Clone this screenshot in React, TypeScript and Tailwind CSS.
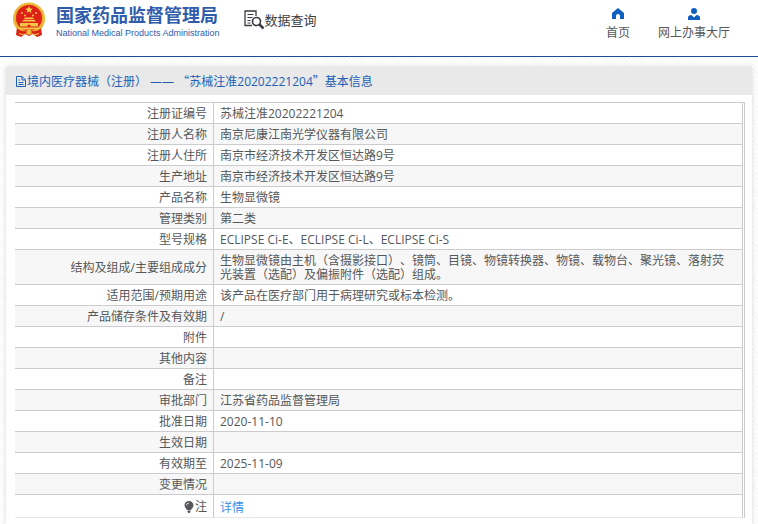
import React from "react";

const rows: { label: string; value: string }[] = [
  { label: "注册证编号", value: "苏械注准20202221204" },
  { label: "注册人名称", value: "南京尼康江南光学仪器有限公司" },
  { label: "注册人住所", value: "南京市经济技术开发区恒达路9号" },
  { label: "生产地址", value: "南京市经济技术开发区恒达路9号" },
  { label: "产品名称", value: "生物显微镜" },
  { label: "管理类别", value: "第二类" },
  { label: "型号规格", value: "ECLIPSE Ci-E、ECLIPSE Ci-L、ECLIPSE Ci-S" },
  {
    label: "结构及组成/主要组成成分",
    value:
      "生物显微镜由主机（含摄影接口）、镜筒、目镜、物镜转换器、物镜、载物台、聚光镜、落射荧光装置（选配）及偏振附件（选配）组成。",
  },
  { label: "适用范围/预期用途", value: "该产品在医疗部门用于病理研究或标本检测。" },
  { label: "产品储存条件及有效期", value: "/" },
  { label: "附件", value: "" },
  { label: "其他内容", value: "" },
  { label: "备注", value: "" },
  { label: "审批部门", value: "江苏省药品监督管理局" },
  { label: "批准日期", value: "2020-11-10" },
  { label: "生效日期", value: "" },
  { label: "有效期至", value: "2025-11-09" },
  { label: "变更情况", value: "" },
];

function Emblem() {
  return (
    <svg viewBox="0 0 34 36" className="h-9 w-[34px] shrink-0" aria-hidden="true">
      <path d="M5 25 L29 25 L30 33 L25 35 L21 32 L17 34 L13 32 L9 35 L4 33 Z" fill="#d92318" />
      <circle cx="17" cy="16.500" r="16" fill="#e9ad2c" />
      <circle cx="17" cy="16.500" r="15" fill="none" stroke="#f5ce55" strokeWidth="1" strokeDasharray="2 1" />
      <circle cx="17" cy="16" r="13" fill="#df2018" />
      <path d="M17 4l1.100 2.500 2.700.2-2.100 1.700.7 2.600-2.400-1.500-2.400 1.500.7-2.600-2.100-1.700 2.700-.2z" fill="#f8d34a" />
      <g fill="#f4c644">
        <circle cx="10" cy="11" r="1" />
        <circle cx="24" cy="11" r="1" />
        <circle cx="13" cy="13.500" r="1" />
        <circle cx="21" cy="13.500" r="1" />
        <path d="M12 17 L13 15.500 H21 L22 17 Z" />
        <path d="M10 19.500 L11.500 17.800 H22.500 L24 19.500 Z" />
        <path d="M8 21 H26 V24.500 H18.500 V22.800 H15.500 V24.500 H8 Z" />
        <path d="M6 25.500 H28 L26 27.500 H8 Z" />
      </g>
      <path d="M5 26 Q10 31 17 28.500 Q24 31 29 26 L28 30 Q22 33 17 30.500 Q12 33 6 30 Z" fill="#d92318" />
      <circle cx="17" cy="30" r="2.500" fill="#f0bd3a" />
      <path d="M7 31.500 L12 33 M27 31.500 L22 33" stroke="#f0bd3a" strokeWidth="1.200" />
    </svg>
  );
}

function SearchDocIcon() {
  return (
    <svg viewBox="0 0 21 20" className="h-5 w-[21px] shrink-0" fill="none" stroke="#3b3d42" aria-hidden="true">
      <path d="M8 15.500H1V1h11v5" strokeWidth="1.300" />
      <path d="M3.500 4.500h6M3.500 7.500h5M3.500 10.500h3M3.500 13h3" strokeWidth="1.200" />
      <circle cx="12.500" cy="11.500" r="4" strokeWidth="1.700" />
      <path d="M15.500 14.500l4 4" strokeWidth="2.500" />
    </svg>
  );
}

function HomeIcon() {
  return (
    <svg viewBox="0 0 12 11" className="h-[11px] w-3" fill="#0f5fbe" aria-hidden="true">
      <path d="M6 0L12 5V11H8V8a2 2 0 0 0-4 0V11H0V5Z" />
    </svg>
  );
}

function PersonIcon() {
  return (
    <svg viewBox="0 0 12 12" className="h-3 w-3" fill="#0f5fbe" aria-hidden="true">
      <circle cx="6" cy="3" r="3" />
      <path d="M0 12V9.500Q0 7.500 3.500 7L6 9.500 8.500 7Q12 7.500 12 9.500V12Z" />
    </svg>
  );
}

function FileIcon() {
  return (
    <svg viewBox="0 0 10 11" className="h-[11px] w-2.5 shrink-0" fill="none" stroke="#1c5fb5" aria-hidden="true">
      <path d="M.5.5H6L9.500 4V10.500H.5ZM6 .5V4H9.500M2.500 4H4M2.500 6.500H7.500M2.500 8.500H7.500" />
    </svg>
  );
}

function BulbIcon() {
  return (
    <svg viewBox="0 0 10 12" className="h-3 w-2.5 shrink-0" aria-hidden="true">
      <path d="M5 0a4.500 4.500 0 0 1 4.500 4.500C9.500 6.500 7.500 7.500 7 9H3C2.500 7.500.5 6.500.5 4.500A4.500 4.500 0 0 1 5 0ZM3.500 9.500h3V11L5.500 12h-1L3.500 11Z" fill="#55575a" />
      <path d="M2.500 4.500A2.500 2.500 0 0 1 5 2" fill="none" stroke="#d5d5d5" />
    </svg>
  );
}

const cell = "border-b border-[#cccccf] pt-1 pb-0.5 leading-[14px]";

export default function App() {
  return (
    <div className="flex min-h-screen flex-col bg-white font-['Open_Sans','Noto_Sans_CJK_SC',sans-serif] text-xs text-[#55575a] [text-spacing-trim:space-all]">
      <header className="flex h-[57px] items-start justify-between border-b border-[#174f9b] pr-7 pl-3">
        <div className="flex items-start">
          <a href="#" className="flex items-start gap-2.5 pt-0.5 text-[#2f5cab]">
            <Emblem />
            <span className="flex flex-col pt-px">
              <span className="text-lg leading-6 font-bold">国家药品监督管理局</span>
              <span className="font-['Liberation_Sans',sans-serif] text-[9px] leading-3">
                National Medical Products Administration
              </span>
            </span>
          </a>
          <h1 className="ml-6 flex items-center pt-2.5 text-[13px] leading-5 text-[#3b3d42]">
            <SearchDocIcon />
            数据查询
          </h1>
        </div>
        <nav className="flex gap-7 pt-2">
          <a href="#" className="flex flex-col items-center gap-[5px]">
            <span className="flex h-3">
              <HomeIcon />
            </span>
            <span className="leading-4">首页</span>
          </a>
          <a href="#" className="flex flex-col items-center gap-[5px]">
            <span className="flex h-3">
              <PersonIcon />
            </span>
            <span className="leading-4">网上办事大厅</span>
          </a>
        </nav>
      </header>

      <main className="flex grow flex-col bg-[repeating-linear-gradient(45deg,#ffffff_0px,#ffffff_2px,#f8f8fb_2px,#f8f8fb_3px)] px-1.5 pt-2.5">
        <section className="grow bg-white shadow-[0_0_5px_#d8d8d8]">
          <h2 className="flex h-7 items-center bg-[#e9e9e9] pt-px pl-2.5 text-[#1c5fb5]">
            <FileIcon />
            <span className="pl-px">
              境内医疗器械（注册） ——{" "}
              <span className="font-['Noto_Sans_CJK_SC',sans-serif]">“</span>
              苏械注准20202221204
              <span className="font-['Noto_Sans_CJK_SC',sans-serif]">”</span>
              基本信息
            </span>
          </h2>
          <div className="mt-[7px] mr-[7px] ml-[9px] border-t border-r border-[#cccccf] pr-px">
            <table className="w-full border-separate border-spacing-0 border-r border-[#cccccf]">
              <tbody>
                {rows.map((row) => (
                  <tr key={row.label} className="even:bg-[#f7f7f7]">
                    <th scope="row" className={`${cell} w-[199px] border-r pr-1.5 text-right font-normal`}>
                      {row.label}
                    </th>
                    <td className={`${cell} pr-3 pl-1.5`}>{row.value}</td>
                  </tr>
                ))}
                <tr>
                  <th scope="row" className="border-r border-b border-[#cccccf] border-b-[#e6e6e6] pt-1 pr-1.5 pb-0.5 text-right leading-4 font-normal">
                    <span className="flex items-center justify-end gap-px">
                      <BulbIcon />注
                    </span>
                  </th>
                  <td className="border-b border-[#e6e6e6] pt-1.5 pb-0.5 pl-1.5 leading-[14px]">
                    <a href="#" className="text-[#3a8ee6]">
                      详情
                    </a>
                  </td>
                </tr>
              </tbody>
            </table>
          </div>
        </section>
      </main>
    </div>
  );
}
